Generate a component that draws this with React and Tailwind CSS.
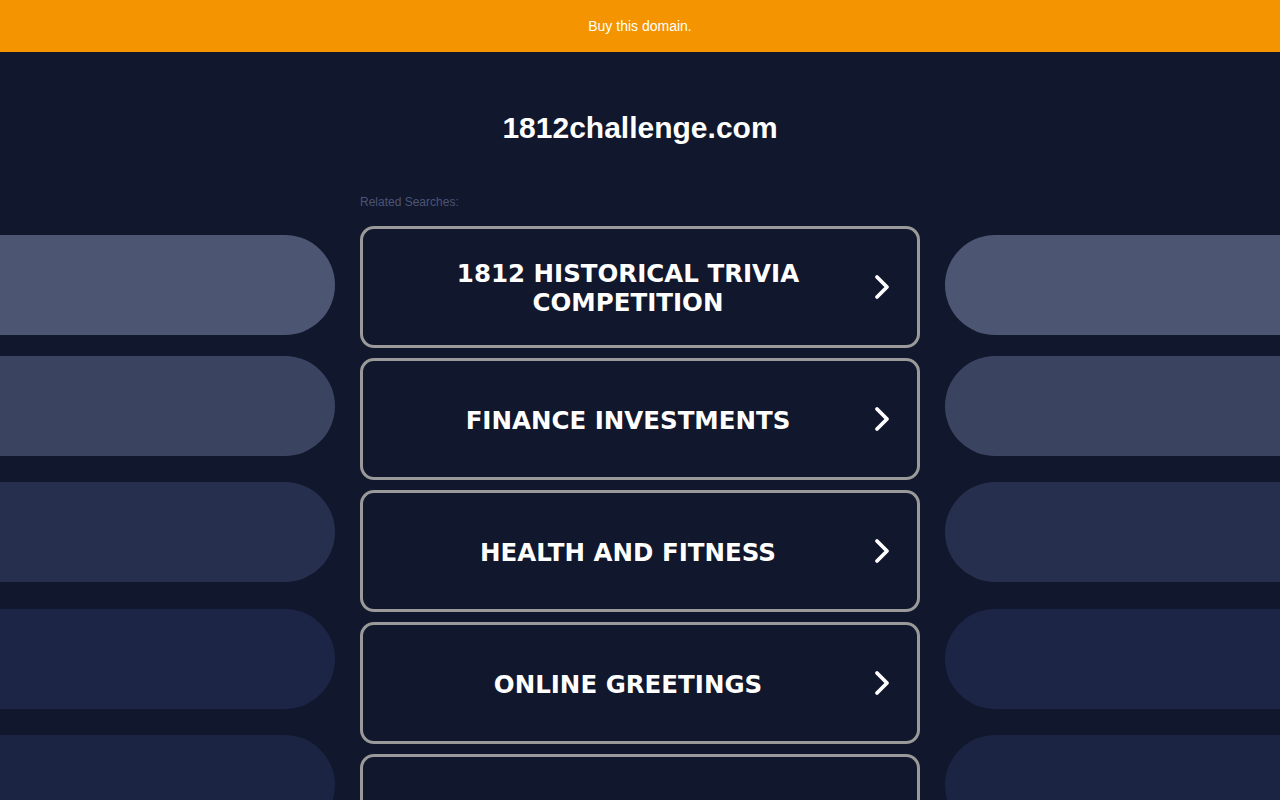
import React from "react";

const searches = [
  "1812 HISTORICAL TRIVIA COMPETITION",
  "FINANCE INVESTMENTS",
  "HEALTH AND FITNESS",
  "ONLINE GREETINGS",
  "",
];

const pills = [
  { color: "bg-[#4c5673]", mt: "mt-[183px]" },
  { color: "bg-[#3a4360]", mt: "mt-[21px]" },
  { color: "bg-[#262f4d]", mt: "mt-[26px]" },
  { color: "bg-[#1d2546]", mt: "mt-[27px]" },
  { color: "bg-[#1c2444]", mt: "mt-[26px]" },
];

const Chevron = () => (
  <svg width="20" height="26" viewBox="0 0 20 26" fill="none">
    <polyline
      points="5,3 15,13 5,23"
      stroke="white"
      strokeWidth="3.8"
      strokeLinecap="round"
      strokeLinejoin="round"
    />
  </svg>
);

const SideColumn = ({ side }) => (
  <div className="w-[335px] shrink-0 flex flex-col">
    {pills.map((p, i) => (
      <div
        key={i}
        className={`h-[100px] shrink-0 ${p.color} ${p.mt} ${
          side === "left" ? "rounded-r-[50px]" : "rounded-l-[50px]"
        }`}
      />
    ))}
  </div>
);

export default function App() {
  return (
    <div
      className="w-full h-[800px] overflow-hidden bg-[#11172c] flex flex-col"
      style={{ fontFamily: "'Liberation Sans', Arial, sans-serif" }}
    >
      <div className="h-[52px] shrink-0 bg-[#f39400] flex items-center justify-center text-white text-[14px]">
        Buy this domain.
      </div>
      <div className="flex justify-between">
        <SideColumn side="left" />
        <div className="w-[560px] shrink-0 flex flex-col">
          <h1 className="mt-[57px] h-[36px] flex items-center justify-center text-white font-bold text-[30px]">
            1812challenge.com
          </h1>
          <p className="mt-[50px] text-[12px] leading-[14px] text-[#4b5576]">
            Related Searches:
          </p>
          <div className="mt-[17px] flex flex-col gap-[10px]">
            {searches.map((s, i) => (
              <div
                key={i}
                className="h-[122px] shrink-0 border-[3px] border-[#9a9a9a] rounded-[14px] flex items-center pl-[21px] pr-[25px]"
              >
                <span
                  className="flex-1 text-center text-white font-bold text-[24.5px] leading-[29px] px-[40px] pt-[2px]"
                  style={{ fontFamily: "'DejaVu Sans', Verdana, sans-serif" }}
                >
                  {s}
                </span>
                {s && <Chevron />}
              </div>
            ))}
          </div>
        </div>
        <SideColumn side="right" />
      </div>
    </div>
  );
}
